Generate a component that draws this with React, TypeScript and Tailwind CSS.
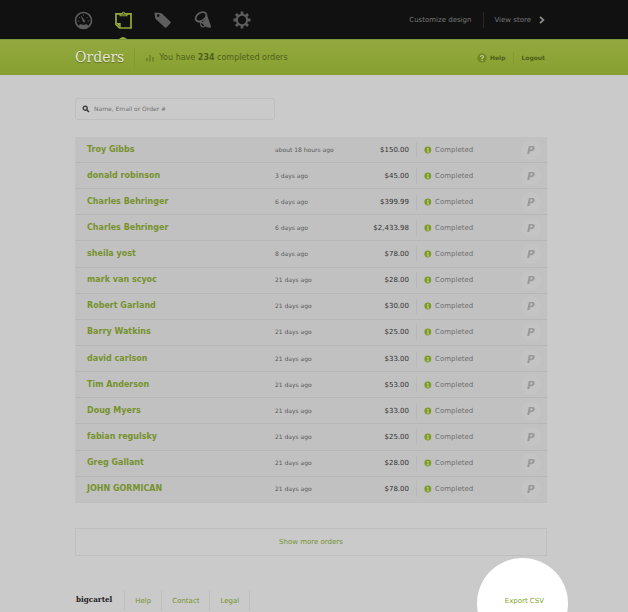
import { ReactNode } from "react"

const orders = [
    { name: "Troy Gibbs", date: "about 18 hours ago", total: "$150.00" },
    { name: "donald robinson", date: "3 days ago", total: "$45.00" },
    { name: "Charles Behringer", date: "6 days ago", total: "$399.99" },
    { name: "Charles Behringer", date: "6 days ago", total: "$2,433.98" },
    { name: "sheila yost", date: "8 days ago", total: "$78.00" },
    { name: "mark van scyoc", date: "21 days ago", total: "$28.00" },
    { name: "Robert Garland", date: "21 days ago", total: "$30.00" },
    { name: "Barry Watkins", date: "21 days ago", total: "$25.00" },
    { name: "david carlson", date: "21 days ago", total: "$33.00" },
    { name: "Tim Anderson", date: "21 days ago", total: "$53.00" },
    { name: "Doug Myers", date: "21 days ago", total: "$33.00" },
    { name: "fabian regulsky", date: "21 days ago", total: "$25.00" },
    { name: "Greg Gallant", date: "21 days ago", total: "$28.00" },
    { name: "JOHN GORMICAN", date: "21 days ago", total: "$78.00" },
]

const footerLinks = ["Help", "Contact", "Legal"]

function NavIcon({ label, active, children }: { label: string; active?: boolean; children: ReactNode }) {
    return (
        <a
            href="#"
            aria-label={label}
            className={
                active
                    ? "relative flex h-full w-5 items-center justify-center text-[#93ab3d]"
                    : "relative flex h-full w-5 items-center justify-center text-[#5e5e5e]"
            }
        >
            <svg viewBox="0 0 20 20" className="size-5" fill="none" stroke="currentColor">
                {children}
            </svg>
            {/* pointer into the green bar */}
            {active && (
                <svg viewBox="0 0 8 3" className="absolute bottom-0 left-1.5 h-[3px] w-2" fill="#93a93f">
                    <path d="M0 3C1.500 2.200 2.500 1 4 1s2.500 1.200 4 2z" />
                </svg>
            )}
        </a>
    )
}

function MainNav() {
    return (
        <nav className="flex h-full gap-5">
            <NavIcon label="Dashboard">
                <circle cx="10.500" cy="10.500" r="8" strokeWidth="1.600" />
                <path d="M8.300 6.300l3.400 4.400.1 1.500-1.600-.5z" fill="currentColor" strokeWidth=".5" />
                <path d="M5.500 16c1-1.500 2-2 3.200-1.600 1.200.4 2.400.4 3.600 0 1.200-.4 2.200.1 3.200 1.600L13 18H8z" fill="currentColor" stroke="none" />
                <path d="M4.800 11h1.500M14.700 11h1.500M6 7.200l1 .8M14.600 7l-1 1M10.500 4.700v1.200" strokeWidth=".9" />
            </NavIcon>
            <NavIcon label="Orders" active>
                <path d="M3 3.800h15v14.200H6.500L3 14.500z" strokeWidth="1.700" />
                <path d="M3 13h4.700v5z" fill="currentColor" stroke="none" />
                <path d="M6.500 6.200V3.200h2.400c.2-1 .8-1.500 1.600-1.500s1.400.5 1.600 1.500h2.400v3z" fill="currentColor" stroke="none" />
                <path d="M7.700 5h5.600" stroke="#3e481c" strokeWidth=".9" />
                <circle cx="10.500" cy="3.200" r=".6" fill="#111" stroke="none" />
            </NavIcon>
            <NavIcon label="Products">
                <path
                    d="M1.500 3.300l.7-.8 5.500.6c.6 0 1 .3 1.400.7l8.200 7.700c.6.500.6 1.200.1 1.800l-3.700 4c-.5.6-1.200.6-1.800.1L3 9.300c-.4-.4-.7-.8-.8-1.400zM5.200 4.300a1.300 1.300 0 1 0 .1 2.600 1.300 1.300 0 0 0-.1-2.600z"
                    fill="currentColor"
                    fillRule="evenodd"
                    stroke="none"
                />
            </NavIcon>
            <NavIcon label="Promotions">
                <ellipse cx="8" cy="6.800" rx="6" ry="3.900" strokeWidth="1.800" transform="rotate(-35 8 6.800)" />
                <path d="M13.600 3.800L18 16.200c.2 1-.4 1.600-1.400 1.500l-3.400-.6L9 12.600c2.800-1.800 4.800-4.800 4.600-8.800z" fill="currentColor" stroke="none" />
                <path d="M3.200 10l1.800 1.400 4.200 1.400 5 3.900" strokeWidth="1.200" />
                <path d="M7.700 12.500c-.6 2.600.6 4.500 2.400 4.300 1-.1 1.700-.6 2.100-1.400" strokeWidth="1.300" />
            </NavIcon>
            <NavIcon label="Settings">
                <circle cx="9" cy="10" r="5.200" strokeWidth="2" />
                <g strokeWidth="2.800">
                    <path d="M9 1.500v3M9 15.500v3M.5 10h3M14.500 10h3" />
                    <path d="M3 4l2.200 2.200M12.800 13.800L15 16M15 4l-2.200 2.200M5.200 13.800L3 16" />
                </g>
            </NavIcon>
        </nav>
    )
}

function StatusIcon() {
    return (
        <svg viewBox="0 0 8 8" className="size-2 shrink-0">
            <circle cx="3.800" cy="4" r="3.400" fill="#7d9a22" />
            <path d="M3 2.800L4 2v3.800M2.800 5.900h2.300" stroke="#c6cda9" strokeWidth=".9" fill="none" />
        </svg>
    )
}

function PaypalBadge() {
    return (
        <span className="mx-auto flex size-5 items-center justify-center rounded-full bg-[#c4c4c4]">
            <svg viewBox="0 0 8 8" className="size-2" role="img" aria-label="PayPal">
                <path
                    d="M1.800 0h3.700C7.300 0 8 1 7.700 2.500 7.300 4.300 6 5.200 4.200 5.200H2.900L2.300 8H.2zM3.500 1.600l-.4 2h1c.8 0 1.300-.3 1.500-1 .1-.7-.2-1-.9-1z"
                    fill="#999"
                    fillRule="evenodd"
                />
            </svg>
        </span>
    )
}

function OrdersTable() {
    return (
        <table className="mt-[17px] h-[366px] w-full table-fixed border-collapse bg-[#c1c1c1]">
            <colgroup>
                <col />
                <col className="w-[80px]" />
                <col className="w-[54px]" />
                <col className="w-[106px]" />
                <col className="w-8" />
            </colgroup>
            <tbody>
                {orders.map((o, i) => (
                    <tr key={i} className="border-b border-[#b7b7b7] last:border-[#bebebe]">
                        <td className="pl-3 text-[8px] font-bold">
                            <a href="#" className="text-[#77922c]">
                                {o.name}
                            </a>
                        </td>
                        <td className="text-[6px] whitespace-nowrap text-[#5a5a5a]">{o.date}</td>
                        <td className="text-right text-[7px] text-[#333]">{o.total}</td>
                        <td className="pl-[7px] text-[7px] text-[#6f6f6f]">
                            <div className="flex h-4 items-center gap-[3px] border-l border-[#b9b9b9] pl-[7px]">
                                <StatusIcon />
                                Completed
                            </div>
                        </td>
                        <td>
                            <PaypalBadge />
                        </td>
                    </tr>
                ))}
            </tbody>
        </table>
    )
}

export default function App() {
    return (
        <div className="min-h-screen overflow-hidden bg-[#cacaca] font-['DejaVu_Sans',Verdana,sans-serif] text-[7px] leading-3">
            <header className="flex h-[39px] items-center justify-between bg-[#111] pr-[83px] pl-[73px] text-[#777]">
                <MainNav />
                <div className="flex items-center">
                    <a href="#" className="pr-3">
                        Customize design
                    </a>
                    <a href="#" className="flex h-4 items-center gap-2 border-l border-[#292929] pl-[10px]">
                        View store
                        <svg viewBox="0 0 6 8" className="h-2 w-1.5" fill="none" stroke="#8b8b8b" strokeWidth="1.800">
                            <path d="M1 .8L4.400 4 1 7.200" />
                        </svg>
                    </a>
                </div>
            </header>

            <div className="flex h-9 items-center justify-between border-t border-[#7f9338] bg-linear-to-b from-[#93a93f] to-[#879f2f] pr-[83px] pl-[75px] text-[#4e611a]">
                <div className="flex items-center">
                    <h1 className="pr-[10px] pb-0.5 font-['DejaVu_Serif',serif] text-[14px] leading-5 text-[#e2e5d8] [text-shadow:0_1px_1px_#5f7220]">
                        Orders
                    </h1>
                    <p className="flex h-5 items-center gap-[5px] border-l border-[#829a30] pl-[11px]">
                        <svg viewBox="0 0 8 8" className="size-2" fill="#738b25">
                            <path d="M0 4h2v3.500H0zM3 1h2v6.500H3zM6 3h2v4.500H6z" />
                        </svg>
                        <span className="text-[8px]">
                            You have <b>234</b> completed orders
                        </span>
                    </p>
                </div>
                <div className="flex items-center text-[6px] font-bold">
                    <a href="#" className="flex items-center gap-[3px] pr-2">
                        <svg viewBox="0 0 10 10" className="size-2.5">
                            <circle cx="5" cy="5" r="4.700" fill="#71891f" />
                            <path d="M3.500 4c0-1 .6-1.500 1.500-1.500S6.500 3 6.500 3.800C6.500 4.800 5 4.800 5 6M5 6.800v1.100" stroke="#c5cca5" strokeWidth="1.100" fill="none" />
                        </svg>
                        Help
                    </a>
                    <a href="#" className="border-l border-[#829a30] pl-[7px]">
                        Logout
                    </a>
                </div>
            </div>

            <main className="pr-[81px] pl-[75px]">
                <label className="mt-[23px] flex h-[22px] w-[200px] items-center gap-1 rounded-[3px] border border-[#bfbfbf] px-1.5">
                    <svg viewBox="0 0 8 8" className="size-2" fill="none" stroke="#3c3c3c">
                        <circle cx="3.200" cy="3.200" r="2" strokeWidth="1.400" />
                        <path d="M4.700 4.700L7 7" strokeWidth="1.600" />
                    </svg>
                    <input
                        type="text"
                        aria-label="Search orders"
                        placeholder="Name, Email or Order #"
                        className="min-w-0 flex-1 bg-transparent text-[6px] text-[#444] outline-none placeholder:text-[#707070]"
                    />
                </label>

                <OrdersTable />

                <button type="button" className="mt-[25px] h-7 w-full border border-[#bfbfbf] text-[#77922c]">
                    Show more orders
                </button>
            </main>

            <footer className="mt-[34px] flex h-[22px] items-center justify-between pr-[84px] pl-[76px] text-[#77922c]">
                <div className="flex items-center">
                    <span className="pr-3 pb-1 font-['DejaVu_Serif_Condensed','DejaVu_Serif',serif] text-[8px] font-bold text-[#222]">
                        bigcartel
                    </span>
                    {footerLinks.map((link) => (
                        <a key={link} href="#" className="flex h-5 items-center border-l border-[#bdbdbd] px-[10px] last:border-r">
                            {link}
                        </a>
                    ))}
                </div>
                {/* spotlight on the export link */}
                <div className="relative">
                    <span className="absolute -top-[37px] -right-6 size-[91px] rounded-full bg-white" />
                    <a href="#" className="relative text-[#83a52a]">
                        Export CSV
                    </a>
                </div>
            </footer>
        </div>
    )
}
